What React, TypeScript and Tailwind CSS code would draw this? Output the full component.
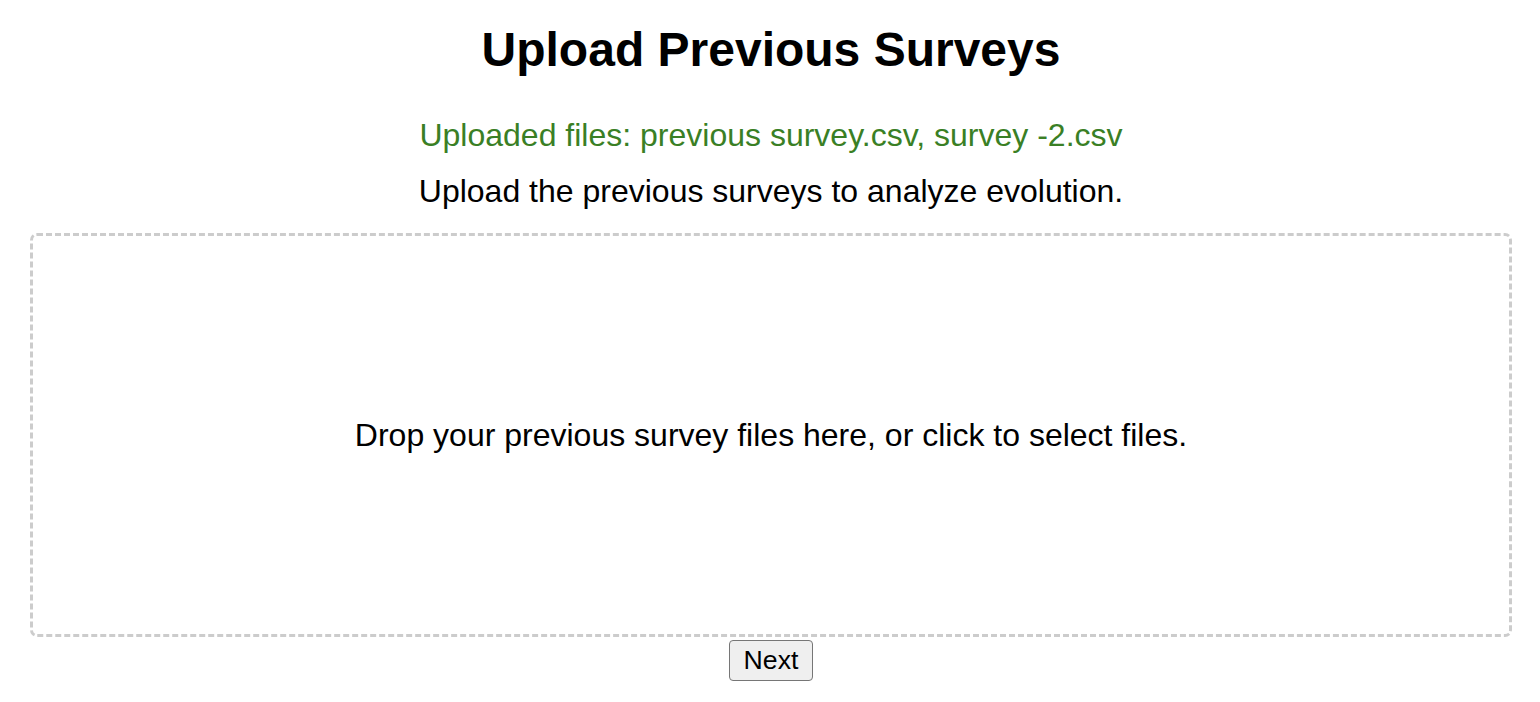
import React from 'react';

const App: React.FC = () => {
  const files = ['previous survey.csv', 'survey -2.csv'];

  return (
    <div className="min-h-[702px] bg-white text-black font-['Liberation_Sans',Arial,sans-serif]">
      <div className="flex flex-col items-center pl-[30px] pr-[28px] pt-[22px]">
        <h1 className="text-[48px] font-bold leading-[55px]">Upload Previous Surveys</h1>

        <p className="mt-[40px] text-[32px] leading-[37px] text-[#3a7f25]">
          Uploaded files: {files.join(', ')}
        </p>
        <p className="mt-[19px] text-[32px] leading-[37px]">
          Upload the previous surveys to analyze evolution.
        </p>

        <div className="mt-[23px] flex h-[404px] w-full cursor-pointer items-center justify-center rounded-[7px] border-[3px] border-dashed border-[#cccccc]">
          <p className="text-[32px] leading-[37px]">
            Drop your previous survey files here, or click to select files.
          </p>
        </div>

        <button className="mt-[3px] rounded-[4px] border-[1.5px] border-[#767676] bg-[#efefef] px-[14px] py-[4px] text-[26.67px] leading-[31px]">
          Next
        </button>
      </div>
    </div>
  );
};

export default App;
